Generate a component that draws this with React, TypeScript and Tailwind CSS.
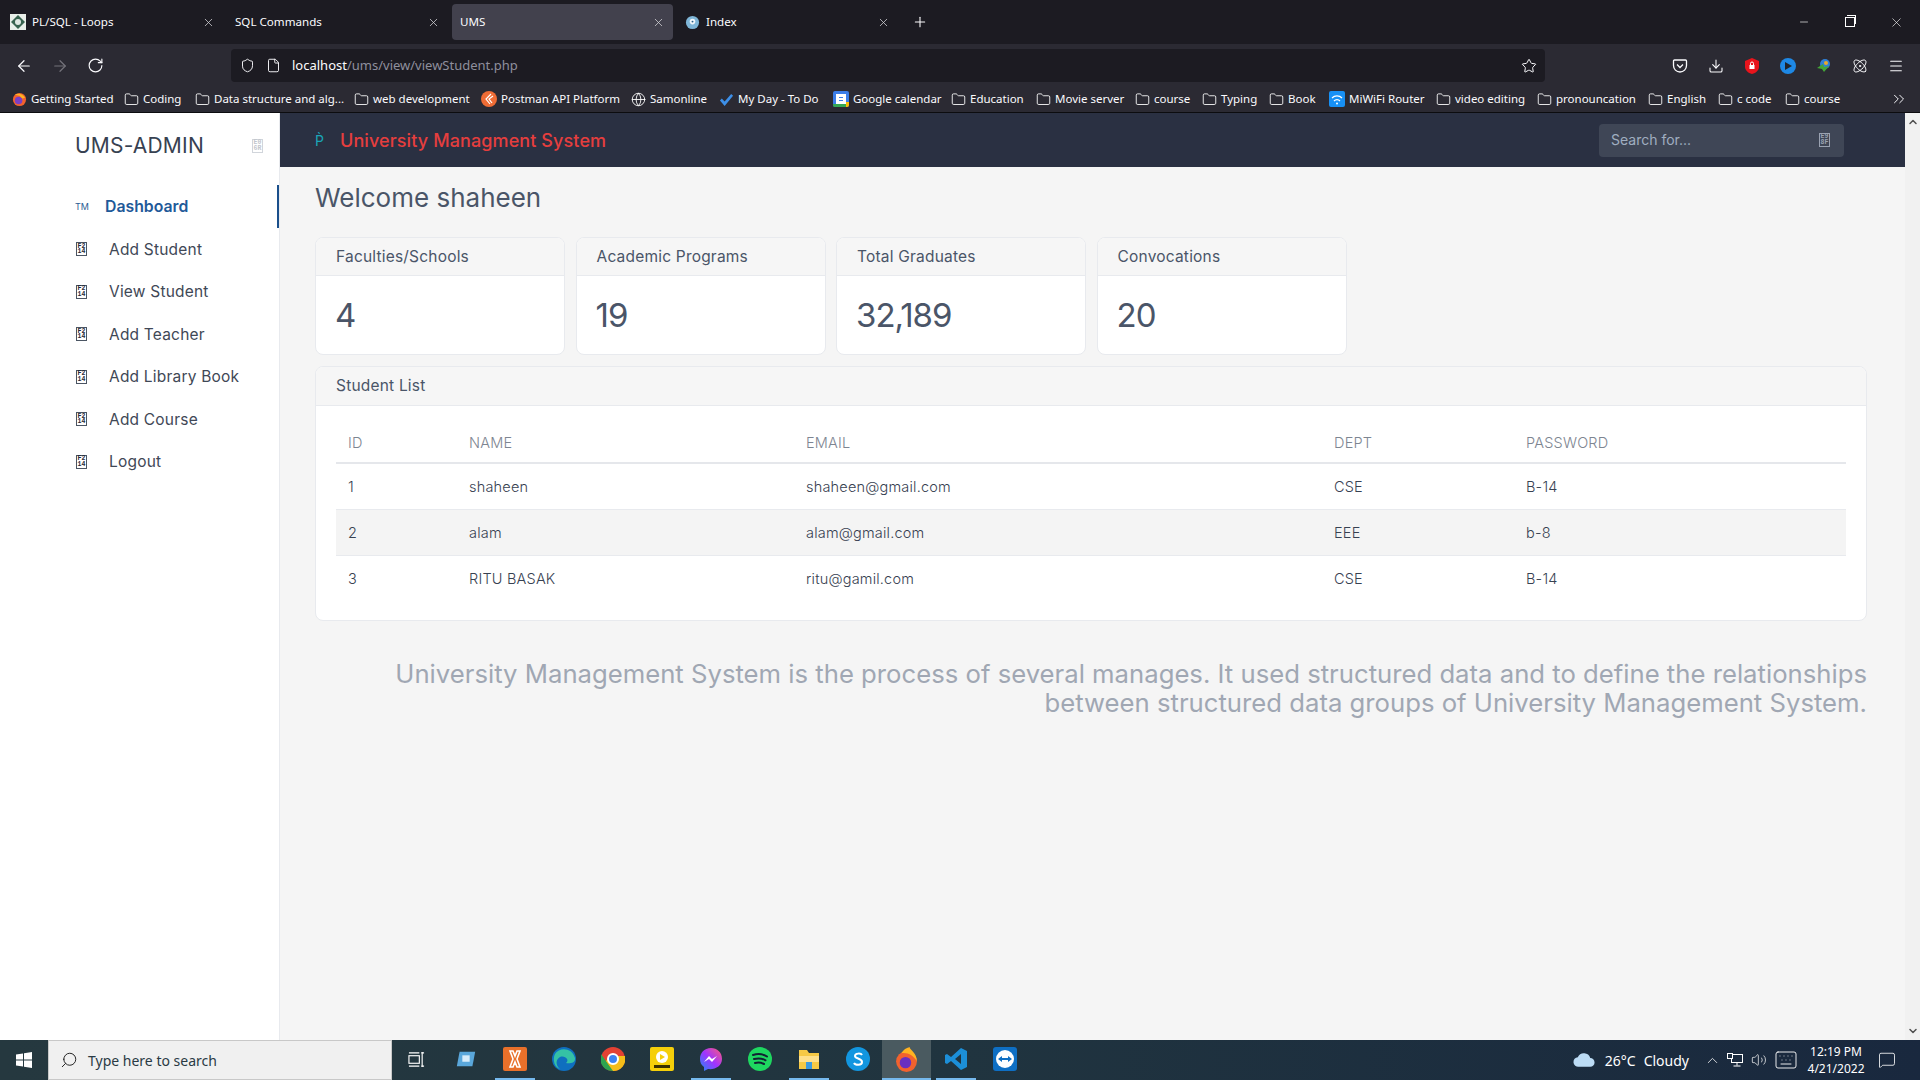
import {
  ArrowLeft,
  ArrowRight,
  RotateCw,
  Shield,
  File,
  Star,
  Download,
  Menu,
  Plus,
  X,
  Minus,
  Folder,
  Globe,
  ChevronsRight,
  ChevronUp,
  ChevronDown,
  Search,
  Volume2,
  MessageSquare,
  Keyboard,
  Atom,
} from "lucide-react";

const tabs = [
  { title: "PL/SQL - Loops", icon: "gem" },
  { title: "SQL Commands" },
  { title: "UMS", active: true },
  { title: "Index", icon: "globe" },
];

const bookmarks = [
  { label: "Getting Started", icon: "ff", w: "w-[112px]" },
  { label: "Coding", w: "w-[71px]" },
  { label: "Data structure and alg...", w: "w-[159px]" },
  { label: "web development", w: "w-[127px]" },
  { label: "Postman API Platform", icon: "postman", w: "w-[150px]" },
  { label: "Samonline", icon: "globe", w: "w-[88px]" },
  { label: "My Day - To Do", icon: "todo", w: "w-[114px]" },
  { label: "Google calendar", icon: "cal", w: "w-[118px]" },
  { label: "Education", w: "w-[85px]" },
  { label: "Movie server", w: "w-[99px]" },
  { label: "course", w: "w-[67px]" },
  { label: "Typing", w: "w-[67px]" },
  { label: "Book", w: "w-[60px]" },
  { label: "MiWiFi Router", icon: "wifi", w: "w-[107px]" },
  { label: "video editing", w: "w-[101px]" },
  { label: "pronouncation", w: "w-[111px]" },
  { label: "English", w: "w-[70px]" },
  { label: "c code", w: "w-[67px]" },
  { label: "course", w: "w-[60px]" },
];

const navItems = ["Add Student", "View Student", "Add Teacher", "Add Library Book", "Add Course", "Logout"];

const stats = [
  { title: "Faculties/Schools", value: "4" },
  { title: "Academic Programs", value: "19" },
  { title: "Total Graduates", value: "32,189" },
  { title: "Convocations", value: "20" },
];

const students = [
  { id: 1, name: "shaheen", email: "shaheen@gmail.com", dept: "CSE", password: "B-14" },
  { id: 2, name: "alam", email: "alam@gmail.com", dept: "EEE", password: "b-8" },
  { id: 3, name: "RITU BASAK", email: "ritu@gamil.com", dept: "CSE", password: "B-14" },
];

const Tofu = ({ top, bottom, className }: { top: string; bottom: string; className: string }) => (
  <span
    className={`flex h-[14px] w-[11px] shrink-0 flex-col items-center justify-center border font-['Liberation_Mono',monospace] text-[6.5px] font-bold leading-[5.5px] ${className}`}
  >
    <span>{top}</span>
    <span>{bottom}</span>
  </span>
);

const BookmarkIcon = ({ kind }: { kind?: string }) => {
  if (kind === "ff")
    return (
      <svg viewBox="0 0 16 16" className="size-[15px] shrink-0">
        <circle cx="8" cy="8" r="7" fill="#f2622e" />
        <circle cx="7" cy="9" r="4" fill="#7a3fc4" />
        <path d="M3 3c3-2 8-2 11 3l-3 1-3-3z" fill="#ffb321" />
      </svg>
    );
  if (kind === "postman")
    return (
      <svg viewBox="0 0 16 16" className="size-[16px] shrink-0">
        <circle cx="8" cy="8" r="8" fill="#ef6c35" />
        <path d="M10 3 5 8l4 5M12 5 8 8l3 4" stroke="#fff" strokeWidth="1.2" fill="none" />
      </svg>
    );
  if (kind === "globe") return <Globe className="size-[15px] shrink-0 text-white" strokeWidth={1.4} />;
  if (kind === "todo")
    return (
      <svg viewBox="0 0 16 16" className="size-[15px] shrink-0">
        <path d="M1 9l2-2 3 3 7-8 2 2-9 11z" fill="#3d8fe8" />
      </svg>
    );
  if (kind === "cal")
    return (
      <svg viewBox="0 0 16 16" className="size-[16px] shrink-0">
        <rect width="16" height="16" rx="2" fill="#3b7de8" />
        <rect x="3" y="3" width="10" height="10" fill="#fff" />
        <path d="M0 13h13v3H2a2 2 0 0 1-2-2z" fill="#34a853" />
        <path d="M13 11h3v3a2 2 0 0 1-2 2h-1z" fill="#fbbc04" />
        <path d="M6 6h4v1H6zM6 9h4v1H6z" fill="#3b7de8" />
      </svg>
    );
  if (kind === "wifi")
    return (
      <svg viewBox="0 0 16 16" className="size-[16px] shrink-0">
        <rect width="16" height="16" rx="2" fill="#1790f5" />
        <path d="M3 7a7 7 0 0 1 10 0M5 10a4 4 0 0 1 6 0" stroke="#fff" strokeWidth="1.2" fill="none" />
        <circle cx="8" cy="12.5" r="1" fill="#fff" />
      </svg>
    );
  return <Folder className="size-[15px] shrink-0 text-white" strokeWidth={1.4} />;
};

const TabBar = () => (
  <div className="flex h-[44px] items-center bg-[#1c1b22]">
    <div className="flex h-[36px] items-center">
      {tabs.map((tab) => (
        <div
          key={tab.title}
          className={`mx-[2px] flex h-[36px] w-[221px] items-center gap-[6px] rounded-[4px] px-[8px] ${
            tab.active ? "bg-[#42414d]" : ""
          }`}
        >
          {tab.icon === "gem" && (
            <svg viewBox="0 0 16 16" className="size-[16px] shrink-0">
              <rect width="16" height="16" fill="#e8efe9" />
              <path d="M8 1l7 7-7 7-7-7z" fill="#37634f" />
              <circle cx="8" cy="8" r="3" fill="#dfe8e2" />
            </svg>
          )}
          {tab.icon === "globe" && (
            <svg viewBox="0 0 16 16" className="size-[15px] shrink-0">
              <circle cx="8" cy="8" r="7" fill="#7fb6d8" />
              <circle cx="8" cy="7" r="3" fill="#f0f6fa" />
              <circle cx="8" cy="7" r="1" fill="#245c85" />
            </svg>
          )}
          <span className="flex-1 font-['Noto_Sans',sans-serif] text-[11.6px] text-[#fbfbfe]">{tab.title}</span>
          <X className="size-[13px] text-[#d6d6da]" strokeWidth={1.4} />
        </div>
      ))}
      <Plus className="ml-[12px] size-[16px] text-[#fbfbfe]" strokeWidth={1.6} />
    </div>
    <div className="ml-auto flex items-center">
      <div className="flex w-[46px] justify-center">
        <Minus className="size-[12px] text-white" strokeWidth={1.3} />
      </div>
      <div className="flex w-[46px] justify-center">
        <span className="relative block size-[10px] border border-white">
          <span className="absolute -top-[3px] left-[1px] block size-[9px] border-t border-r border-white" />
        </span>
      </div>
      <div className="flex w-[47px] justify-center">
        <X className="size-[15px] text-white" strokeWidth={1} />
      </div>
    </div>
  </div>
);

const NavBar = () => (
  <div className="flex h-[44px] items-center bg-[#2b2a33] pb-[1px]">
    <div className="flex w-[231px] items-center gap-[18px] pl-[15px] text-[#fbfbfe]">
      <ArrowLeft className="size-[18px]" strokeWidth={1.6} />
      <ArrowRight className="size-[18px] text-[#74737b]" strokeWidth={1.6} />
      <RotateCw className="size-[17px]" strokeWidth={1.6} />
    </div>
    <div className="flex h-[33px] w-[1314px] items-center rounded-[4px] bg-[#1c1b22] pl-[9px] pr-[8px]">
      <Shield className="size-[15px] text-[#fbfbfe]" strokeWidth={1.5} />
      <File className="ml-[11px] size-[15px] text-[#fbfbfe]" strokeWidth={1.5} />
      <span className="ml-[11px] font-['Noto_Sans',sans-serif] text-[13px] text-[#fbfbfe]">
        localhost<span className="text-[#8f8f9d]">/ums/view/viewStudent.php</span>
      </span>
      <Star className="ml-auto size-[16px] text-[#fbfbfe]" strokeWidth={1.5} />
    </div>
    <div className="ml-auto flex items-center gap-[20px] pr-[16px] text-[#fbfbfe]">
      <svg viewBox="0 0 16 16" className="size-[16px]" fill="none" stroke="currentColor" strokeWidth="1.3">
        <path d="M2.500 2h11a1 1 0 0 1 1 1v4.500a6.500 6.500 0 0 1-13 0V3a1 1 0 0 1 1-1z" />
        <path d="M5 6.500l3 3 3-3" />
      </svg>
      <Download className="size-[16px]" strokeWidth={1.6} />
      <svg viewBox="0 0 16 16" className="size-[16px]">
        <path d="M8 0l7 3v6c0 3-3 6-7 7-4-1-7-4-7-7V3z" fill="#e8141c" />
        <rect x="5.5" y="7" width="5" height="4" fill="#fff" />
        <path d="M6.500 7V5.500a1.500 1.500 0 0 1 3 0V7" stroke="#fff" fill="none" />
      </svg>
      <svg viewBox="0 0 16 16" className="size-[16px]">
        <circle cx="8" cy="8" r="8" fill="#1e88e5" />
        <path d="M5 4l7 4-7 4z" fill="#20232a" />
      </svg>
      <svg viewBox="0 0 16 16" className="size-[16px]">
        <circle cx="9" cy="6" r="5" fill="#2f7fd6" />
        <path d="M1 10l6-4 1 3 5-1-5 6-2-3z" fill="#43a537" />
        <circle cx="10" cy="5" r="2" fill="#e9a92a" />
      </svg>
      <Atom className="size-[16px]" strokeWidth={1.5} />
      <Menu className="size-[16px]" strokeWidth={1.6} />
    </div>
  </div>
);

const BookmarksBar = () => (
  <div className="flex h-[25px] items-center border-b border-[#0c0c0f] bg-[#2b2a33] pb-[2px] pl-[12px]">
    {bookmarks.map((b, i) => (
      <div key={i} className={`flex items-center gap-[4px] ${b.w}`}>
        <BookmarkIcon kind={b.icon} />
        <span className="whitespace-nowrap font-['Noto_Sans',sans-serif] text-[11.5px] text-[#fbfbfe]">{b.label}</span>
      </div>
    ))}
    <ChevronsRight className="ml-auto mr-[12px] size-[18px] text-[#fbfbfe]" strokeWidth={1.3} />
  </div>
);

const Sidebar = () => (
  <aside className="flex w-[280px] shrink-0 flex-col border-r border-[#e8eaee] bg-white font-['Inter',sans-serif]">
    <div className="flex h-[64px] items-center pl-[75px] pr-[16px] pt-[1px]">
      <span className="text-[21px] tracking-[0.2px] text-[#374151]">UMS-ADMIN</span>
      <Tofu top="E0" bottom="6R" className="ml-auto border-[#d1d5db] text-[#c2c6cc]" />
    </div>
    <div className="mt-[8px] flex h-[43px] items-center border-r-[2px] border-[#1a4f8b] pl-[75px]">
      <span className="w-[30px] text-[9px] text-[#2c5d94]">TM</span>
      <span className="text-[15.8px] font-semibold text-[#1f5a99]">Dashboard</span>
    </div>
    {navItems.map((item) => (
      <div key={item} className="flex h-[42.5px] items-center pl-[76px]">
        <Tofu top="F2" bottom="14" className="mr-[22px] border-[#4b5563] text-[#1f2937]" />
        <span className="text-[15.5px] tracking-[0.2px] text-[#3f4856]">{item}</span>
      </div>
    ))}
  </aside>
);

const Header = () => (
  <div className="flex h-[54px] items-center bg-[#2a3042] pl-[35px] pr-[61px] font-['Inter',sans-serif]">
    <span className="w-[25px] text-[14px] text-[#1aa5b8]">P&#768;</span>
    <span className="text-[18px] font-medium tracking-[0.1px] text-[#e53e3e]">University Managment System</span>
    <div className="ml-auto flex h-[33px] w-[245px] items-center justify-between rounded-[4px] bg-[#3f4656] pb-[1px] pl-[12px] pr-[14px]">
      <span className="text-[14px] text-[#a0aec0]">Search for...</span>
      <Tofu top="E9" bottom="8F" className="border-[#9aa2b1] text-[#9aa2b1]" />
    </div>
  </div>
);

const StatCard = ({ title, value }: { title: string; value: string }) => (
  <div className="h-[118px] w-[250px] overflow-hidden rounded-[8px] border border-[#e8eaee] bg-white">
    <div className="flex h-[38px] items-center border-b border-[#e8eaee] bg-[#f6f6f6] pl-[20px] text-[15.5px] tracking-[0.2px] text-[#4a5568]">
      {title}
    </div>
    <div className="flex h-[78px] items-center pt-[2px] pl-[19px] text-[33px] tracking-[-1px] text-[#4a5568]">{value}</div>
  </div>
);

const StudentTable = () => (
  <div className="mt-[11px] h-[255px] overflow-hidden rounded-[8px] border border-[#e8eaee] bg-white">
    <div className="flex h-[39px] items-center border-b border-[#e8eaee] bg-[#f6f6f6] pl-[20px] text-[15.5px] tracking-[0.2px] text-[#4a5568]">
      Student List
    </div>
    <div className="px-[20px] pt-[16px]">
      <table className="w-full table-fixed border-collapse text-[14.5px] font-light tracking-[0.2px] text-[#374151]">
        <colgroup>
          <col className="w-[121px]" />
          <col className="w-[337px]" />
          <col className="w-[528px]" />
          <col className="w-[192px]" />
          <col />
        </colgroup>
        <thead>
          <tr className="h-[41px] border-b-[2px] border-[#e5e7eb] text-left text-[#7d8591]">
            <th className="px-[12px] pt-[2px] font-light">ID</th>
            <th className="px-[12px] pt-[2px] font-light">NAME</th>
            <th className="px-[12px] pt-[2px] font-light">EMAIL</th>
            <th className="px-[12px] pt-[2px] font-light">DEPT</th>
            <th className="px-[12px] pt-[2px] font-light">PASSWORD</th>
          </tr>
        </thead>
        <tbody>
          {students.map((s) => (
            <tr key={s.id} className="h-[46px] border-b border-[#e8eaee] last:border-b-0 even:bg-[#f4f4f4]">
              <td className="px-[12px] pt-[1px]">{s.id}</td>
              <td className="px-[12px] pt-[1px]">{s.name}</td>
              <td className="px-[12px] pt-[1px]">{s.email}</td>
              <td className="px-[12px] pt-[1px]">{s.dept}</td>
              <td className="px-[12px] pt-[1px]">{s.password}</td>
            </tr>
          ))}
        </tbody>
      </table>
    </div>
  </div>
);

const Scrollbar = () => (
  <div className="flex w-[15px] shrink-0 flex-col items-center justify-between bg-[#f1f1f1] py-[3px] text-[#505050]">
    <ChevronUp className="size-[12px]" strokeWidth={3} />
    <ChevronDown className="size-[12px]" strokeWidth={3} />
  </div>
);

const TaskIcon = ({ children, active, open }: { children: React.ReactNode; active?: boolean; open?: boolean }) => (
  <div className={`flex h-[40px] w-[49px] flex-col items-center ${active ? "bg-[#4a5a60]" : ""}`}>
    <div className="flex flex-1 items-center justify-center">{children}</div>
    <span className={`h-[2px] ${active ? "w-full" : "w-[40px]"} ${open ? "bg-[#76b9ed]" : ""}`} />
  </div>
);

const Taskbar = () => (
  <div className="flex h-[40px] shrink-0 items-center bg-gradient-to-r from-[#25383f] via-[#20343f] to-[#19283e] font-['Noto_Sans',sans-serif] text-white">
    <div className="flex w-[48px] justify-center">
      <svg viewBox="0 0 16 16" className="size-[16px]">
        <path d="M0 2.500l7-1v6H0zM8 1.300 16 0v7.500H8zM0 8.500h7v6l-7-1zM8 8.500h8V16l-8-1.300z" fill="#fff" />
      </svg>
    </div>
    <div className="flex h-[40px] w-[344px] items-center border border-[#c8c8c8] bg-[#f0f0f0] pl-[11px] text-[14px] text-[#2a3a44]">
      <Search className="size-[18px] -scale-x-100 text-[#222]" strokeWidth={1.3} />
      <span className="ml-[10px]">Type here to search</span>
    </div>
    <div className="flex">
      <TaskIcon>
        <svg viewBox="0 0 18 18" className="size-[17px]" fill="none" stroke="#fff" strokeWidth="1.2">
          <rect x="1" y="5" width="11" height="8" />
          <path d="M15 1v16M1 2h11M1 16h11M14 2h3M14 16h3" />
        </svg>
      </TaskIcon>
      <TaskIcon>
        <svg viewBox="0 0 24 24" className="size-[22px]">
          <path d="M5 4h17l-3 16H2z" fill="#5aa7db" />
          <rect x="8" y="8" width="8" height="7" fill="#d8ecfa" />
        </svg>
      </TaskIcon>
      <TaskIcon open>
        <svg viewBox="0 0 24 24" className="size-[24px]">
          <rect width="24" height="24" rx="2" fill="#e8702a" />
          <path d="M7 4h3l2 5 2-5h3l-3 8 3 8h-3l-2-5-2 5H7l3-8z" fill="none" stroke="#fff" strokeWidth="1.6" />
        </svg>
      </TaskIcon>
      <TaskIcon>
        <svg viewBox="0 0 24 24" className="size-[24px]">
          <circle cx="12" cy="12" r="12" fill="#0f6fbf" />
          <path d="M3 7c4-7 17-7 20 4 1 5-6 6-9 5 4-3-1-8-6-6-4 2-5 8 0 12C3 21 0 13 3 7z" fill="#35c1a5" />
        </svg>
      </TaskIcon>
      <TaskIcon>
        <svg viewBox="0 0 24 24" className="size-[24px]">
          <circle cx="12" cy="12" r="12" fill="#e34133" />
          <path d="M2 19 8 9h16a12 12 0 0 1-12 15z" fill="#f5bd19" />
          <path d="M12 24C6 24 2 21 0 16V7l7 10z" fill="#2ea44f" />
          <circle cx="12" cy="12" r="5" fill="#3d82f0" stroke="#fff" strokeWidth="2" />
        </svg>
      </TaskIcon>
      <TaskIcon>
        <svg viewBox="0 0 24 24" className="size-[24px]">
          <rect width="24" height="24" rx="2" fill="#f5cf0a" />
          <circle cx="12" cy="10" r="6" fill="#fff" />
          <path d="M10 7l5 3-5 3z" fill="#f5cf0a" />
          <rect x="4" y="18" width="16" height="3" fill="#3a3000" />
        </svg>
      </TaskIcon>
      <TaskIcon open>
        <svg viewBox="0 0 24 24" className="size-[24px]">
          <defs>
            <linearGradient id="msg" x1="0" y1="1" x2="1" y2="0">
              <stop offset="0" stopColor="#1f8cf7" />
              <stop offset="0.5" stopColor="#a033ff" />
              <stop offset="1" stopColor="#ff5c7a" />
            </linearGradient>
          </defs>
          <path d="M12 1C5 1 1 6 1 12c0 3 1 6 4 8v4l4-2c7 1 14-3 14-10S18 1 12 1z" fill="url(#msg)" />
          <path d="M5 15l5-6 3 3 5-3-5 6-3-3z" fill="#fff" />
        </svg>
      </TaskIcon>
      <TaskIcon>
        <svg viewBox="0 0 24 24" className="size-[24px]">
          <circle cx="12" cy="12" r="12" fill="#1ed760" />
          <path d="M5 8c5-1.500 10-1 14 1.500M6 12c4-1 8-.8 11.500 1.300M7 16c3-.8 6-.6 9 1" stroke="#123" strokeWidth="2" strokeLinecap="round" fill="none" />
        </svg>
      </TaskIcon>
      <TaskIcon open>
        <svg viewBox="0 0 24 24" className="size-[24px]">
          <path d="M2 3h8l2 3h10v16H2z" fill="#f6c945" />
          <rect x="2" y="9" width="20" height="6" fill="#ffe08a" />
          <rect x="9" y="15" width="6" height="7" fill="#3d9be0" />
        </svg>
      </TaskIcon>
      <TaskIcon>
        <svg viewBox="0 0 24 24" className="size-[24px]">
          <circle cx="12" cy="12" r="12" fill="#1296e0" />
          <path d="M16 8c-1-2-7-2-7 1s7 2 7 6-7 3-8 1" stroke="#fff" strokeWidth="2" fill="none" />
        </svg>
      </TaskIcon>
      <TaskIcon active open>
        <svg viewBox="0 0 24 24" className="size-[25px]">
          <circle cx="12" cy="14" r="10" fill="#f2622e" />
          <circle cx="11" cy="15" r="5.500" fill="#6a2fc0" />
          <path d="M7 6c4-6 7-5 8-6 0 3 7 5 7 14-3-6-9-9-15-8z" fill="#ffb321" />
        </svg>
      </TaskIcon>
      <TaskIcon open>
        <svg viewBox="0 0 24 24" className="size-[24px]">
          <path d="M17 1l6 3v16l-6 3L7 14l-4 3-2-1V8l2-1 4 3zM17 7l-6 5 6 5z" fill="#1c8fd8" />
        </svg>
      </TaskIcon>
      <TaskIcon>
        <svg viewBox="0 0 24 24" className="size-[24px]">
          <rect width="24" height="24" rx="3" fill="#0e6fc4" />
          <circle cx="12" cy="12" r="9" fill="#fff" />
          <path d="M5 12l4-3v2h6V9l4 3-4 3v-2H9v2z" fill="#0e6fc4" />
        </svg>
      </TaskIcon>
    </div>
    <div className="ml-auto flex items-center">
      <svg viewBox="0 0 24 16" className="h-[16px] w-[23px]">
        <path d="M6 15a5 5 0 0 1-1-10 7 7 0 0 1 13 1 4.500 4.500 0 0 1 0 9z" fill="#bcdcf5" />
      </svg>
      <span className="ml-[9px] text-[14px]">26°C</span>
      <span className="ml-[8px] text-[14px]">Cloudy</span>
      <ChevronUp className="ml-[15px] size-[17px]" strokeWidth={1.1} />
      <svg viewBox="0 0 16 16" className="ml-[6px] size-[16px]" fill="none" stroke="#fff" strokeWidth="1">
        <rect x="4.500" y="2.500" width="11" height="8" />
        <rect x="0.500" y="1.500" width="5" height="5" fill="#1c2c3e" />
        <path d="M10 10.500v3M6.500 14h7" />
      </svg>
      <Volume2 className="ml-[8px] size-[16px]" strokeWidth={1.1} />
      <Keyboard className="ml-[7px] size-[24px]" strokeWidth={0.9} />
      <div className="ml-[12px] flex w-[52px] flex-col items-center text-[12px] leading-[17px]">
        <span className="whitespace-nowrap">12:19 PM</span>
        <span className="whitespace-nowrap">4/21/2022</span>
      </div>
      <MessageSquare className="ml-[16px] mr-[24px] size-[18px]" strokeWidth={1.1} />
    </div>
  </div>
);

export default function App() {
  return (
    <div className="flex h-[1080px] w-[1920px] flex-col overflow-hidden">
      <TabBar />
      <NavBar />
      <BookmarksBar />
      <div className="flex min-h-0 flex-1 bg-[#f5f5f5]">
        <Sidebar />
        <div className="flex min-w-0 flex-1 flex-col font-['Inter',sans-serif]">
          <Header />
          <main className="flex-1 pl-[35px] pr-[38px]">
            <h1 className="mt-[14px] text-[26px] leading-[34px] text-[#4a5568]">Welcome shaheen</h1>
            <div className="mt-[22px] flex gap-[10.500px]">
              {stats.map((s) => (
                <StatCard key={s.title} title={s.title} value={s.value} />
              ))}
            </div>
            <StudentTable />
            <p className="mt-[38px] pl-[40px] text-right text-[25.7px] leading-[29px] text-[#a0a7b3]">
              University Management System is the process of several manages. It used structured data and to define the relationships between structured data groups of University Management System.
            </p>
          </main>
        </div>
        <Scrollbar />
      </div>
      <Taskbar />
    </div>
  );
}
